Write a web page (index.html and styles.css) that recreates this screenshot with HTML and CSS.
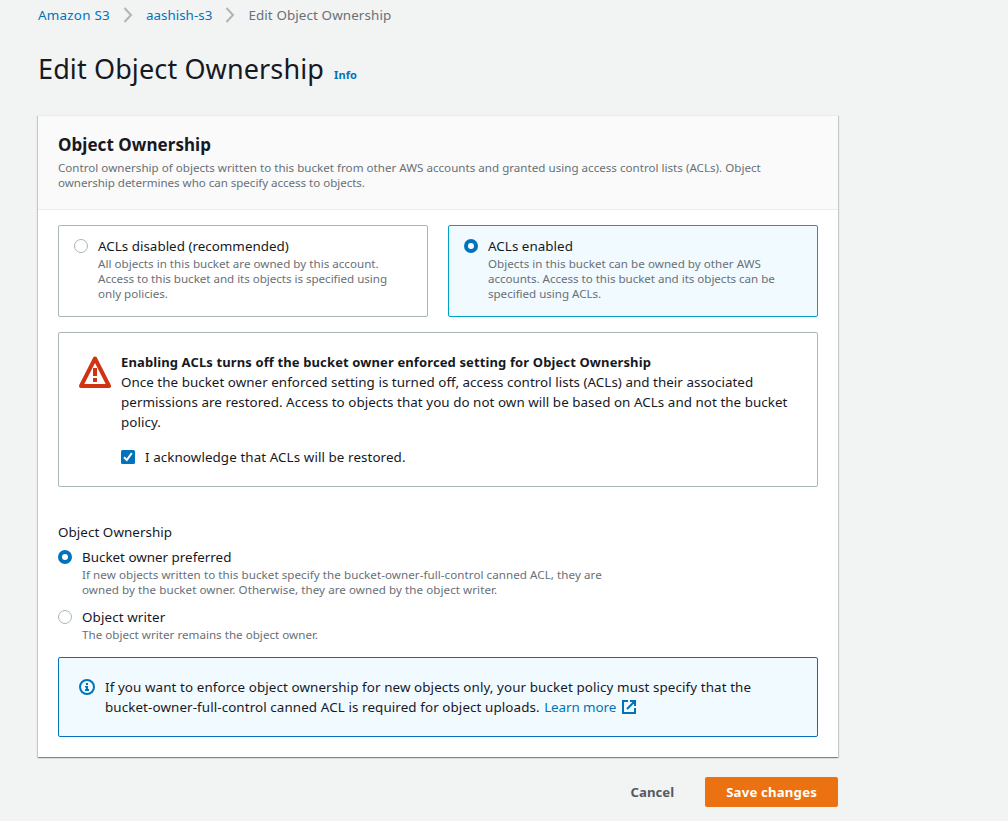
FILE: index.html
```html
<!DOCTYPE html>
<html lang="en">
<head>
<meta charset="utf-8">
<title>Edit Object Ownership</title>
<link rel="stylesheet" href="styles.css">
</head>
<body>
<main class="page">
  <nav class="crumbs">
    <a class="link ls-24" href="#">Amazon S3</a>
    <svg class="chevron" viewBox="0 0 10 16"><path d="M1.500 1l6.500 7-6.500 7"/></svg>
    <a class="link ls-2" href="#">aashish-s3</a>
    <svg class="chevron" viewBox="0 0 10 16"><path d="M1.500 1l6.500 7-6.500 7"/></svg>
    <span class="current ls-11">Edit Object Ownership</span>
  </nav>
  <header class="title-row">
    <h1>Edit Object Ownership</h1>
    <a class="info-link" href="#">Info</a>
  </header>
  <section class="panel">
    <header class="panel-head">
      <h2>Object Ownership</h2>
      <p class="hint"><span class="ls-1">Control ownership of objects written to this bucket from other AWS accounts and granted using access control lists (ACLs). Object</span><br><span class="ls-n4">ownership determines who can specify access to objects.</span></p>
    </header>
    <div class="panel-body">
      <div class="tiles">
        <label class="tile"><i class="radio"></i>
          <div><div class="name ls-1">ACLs disabled (recommended)</div>
          <p class="hint"><span class="ls-2">All objects in this bucket are owned by this account.</span><br><span class="ls-n3">Access to this bucket and its objects is specified using</span><br>only policies.</p></div>
        </label>
        <label class="tile selected"><i class="radio on"></i>
          <div><div class="name ls-4">ACLs enabled</div>
          <p class="hint"><span class="ls-4">Objects in this bucket can be owned by other AWS</span><br><span class="ls-n3">accounts. Access to this bucket and its objects can be</span><br><span class="ls-n3">specified using ACLs.</span></p></div>
        </label>
      </div>
      <div class="warning">
        <svg class="warn-icon" viewBox="0 0 32 32"><path class="tri" d="M16 2.500L30 30H2z"/><path class="bang" d="M14 12h4v8h-4zM14 22h4v4h-4z"/></svg>
        <div><strong class="ls-12">Enabling ACLs turns off the bucket owner enforced setting for Object Ownership</strong>
        <p><span class="ls-3">Once the bucket owner enforced setting is turned off, access control lists (ACLs) and their associated</span><br><span class="ls-4h">permissions are restored. Access to objects that you do not own will be based on ACLs and not the bucket</span><br><span class="ls-6">policy.</span></p>
        <label class="ack"><svg class="check" viewBox="0 0 14 14"><rect width="14" height="14" rx="1.500"/><path d="M3 7.200l2.800 2.800 5-6.800"/></svg><span class="ls-8">I acknowledge that ACLs will be restored.</span></label></div>
      </div>
      <div class="field">
        <div class="name ls-6">Object Ownership</div>
        <label class="option"><i class="radio on"></i><div><div class="name">Bucket owner preferred</div><p class="hint ls-6">If new objects written to this bucket specify the bucket-owner-full-control canned ACL, they are<br>owned by the bucket owner. Otherwise, they are owned by the object writer.</p></div></label>
        <label class="option"><i class="radio"></i><div><div class="name ls-11">Object writer</div><p class="hint ls-2">The object writer remains the object owner.</p></div></label>
      </div>
      <div class="notice">
        <svg class="info-icon" viewBox="0 0 16 16"><circle cx="8" cy="8" r="7"/><path d="M7 4h2v2H7zM6 7h3v3h1v2H6v-2h1V8.500H6z"/></svg>
        <p><span class="ls-9">If you want to enforce object ownership for new objects only, your bucket policy must specify that the</span><br><span class="ls-10">bucket-owner-full-control canned ACL is required for object uploads.</span> <a class="link learn" href="#">Learn more<svg class="ext" viewBox="0 0 14 14"><path d="M6 1H1v12h12V8M8 1h5v5M13 1L5 9"/></svg></a></p>
      </div>
    </div>
  </section>
  <footer class="actions"><button class="cancel">Cancel</button><button class="save">Save changes</button></footer>
</main>
</body>
</html>
```
FILE: styles.css
```css
*{box-sizing:border-box}
body{margin:0;background:#f2f3f3;color:#16191f;font:13.400px/20px "Noto Sans",sans-serif;white-space:nowrap}
h1,h2,p{margin:0;font-weight:400}
.page{width:838px;padding:5px 0 0 38px}
.link{color:#0073bb;text-decoration:none}
.crumbs{display:flex;align-items:center;height:20px}
.chevron{width:10px;height:16px;margin:0 13px;fill:none;stroke:#aab7b8;stroke-width:2}
.current{color:#687078}
.title-row{display:flex;align-items:baseline;gap:10px;margin-top:26px;height:64px}
h1{font-size:27px;line-height:36px;letter-spacing:.118px}
.info-link{color:#0073bb;font-size:11px;font-weight:700;letter-spacing:.109px;text-decoration:none}
.panel{height:642px;background:#fff;box-shadow:0 1px 1px 0 rgba(0,28,36,.3),1px 1px 1px 0 rgba(0,28,36,.15),-1px 1px 1px 0 rgba(0,28,36,.15)}
.panel-head{height:95px;padding:18px 20px 0;background:#fafafa;border-bottom:1px solid #eaeded;border-top:1px solid #eaeded}
h2{font-size:17px;line-height:22px;font-weight:700;letter-spacing:.051px;margin-bottom:4px}
.hint{font-size:11.600px;line-height:15px;color:#687078}
.panel-body{padding:15px 20px 0}
.tiles{display:grid;grid-template-columns:1fr 1fr;gap:20px}
.tile{display:flex;gap:10px;height:92px;padding:10px 15px;border:1px solid #aab7b8;border-radius:2px}
.selected{background:#f1faff;border-color:#00a1c9}
.radio{flex:none;width:14px;height:14px;margin-top:3px;border:1px solid #aab7b8;border-radius:50%;background:#fff}
.radio.on{border:4px solid #0073bb}
.name{line-height:20px}
.warning{display:flex;gap:10px;height:155px;margin-top:15px;padding:19px 20px;border:1px solid #aab7b8;border-radius:2px}
.warning strong{display:block;font-size:13px}
.warn-icon{width:32px;height:32px;margin-top:4px}
.tri{fill:none;stroke:#d13212;stroke-width:4;stroke-linejoin:round}
.bang{fill:#d13212}
.ack{display:flex;align-items:center;gap:10px;margin-top:15px}
.check{width:14px;height:14px;fill:#0073bb}
.check path{fill:none;stroke:#fff;stroke-width:2}
.field{height:135px;margin-top:35px}
.option{display:flex;gap:10px;margin-top:5px}
.option + .option{margin-top:10px}
.notice{display:flex;gap:10px;height:80px;padding:19px 20px;background:#f1faff;border:1px solid #0073bb;border-radius:2px}
.info-icon{width:16px;height:16px;margin-top:2px;fill:#0073bb}
.info-icon circle{fill:none;stroke:#0073bb;stroke-width:2}
.learn{margin-left:1px;letter-spacing:-.080px}
.ext{width:14px;height:14px;margin-left:6px;vertical-align:-2px;fill:none;stroke:#0073bb;stroke-width:2}
.actions{display:flex;justify-content:flex-end;gap:10px;margin-top:20px}
button{height:30px;padding:0 21px;border:0;border-radius:2px;background:none;font:700 13.200px/20px "Noto Sans",sans-serif;color:#545b64}
.save{background:#ec7211;color:#fff;letter-spacing:.180px}
/* tracking steps, in hundredths of a pixel */
.ls-n4{letter-spacing:-.045px}
.ls-n3{letter-spacing:-.030px}
.ls-1{letter-spacing:.012px}
.ls-2{letter-spacing:.020px}
.ls-3{letter-spacing:.034px}
.ls-4{letter-spacing:.036px}
.ls-4h{letter-spacing:.045px}
.ls-6{letter-spacing:.060px}
.ls-8{letter-spacing:.080px}
.ls-9{letter-spacing:.094px}
.ls-10{letter-spacing:.096px}
.ls-11{letter-spacing:.110px}
.ls-12{letter-spacing:.120px}
.ls-24{letter-spacing:.240px}
```
